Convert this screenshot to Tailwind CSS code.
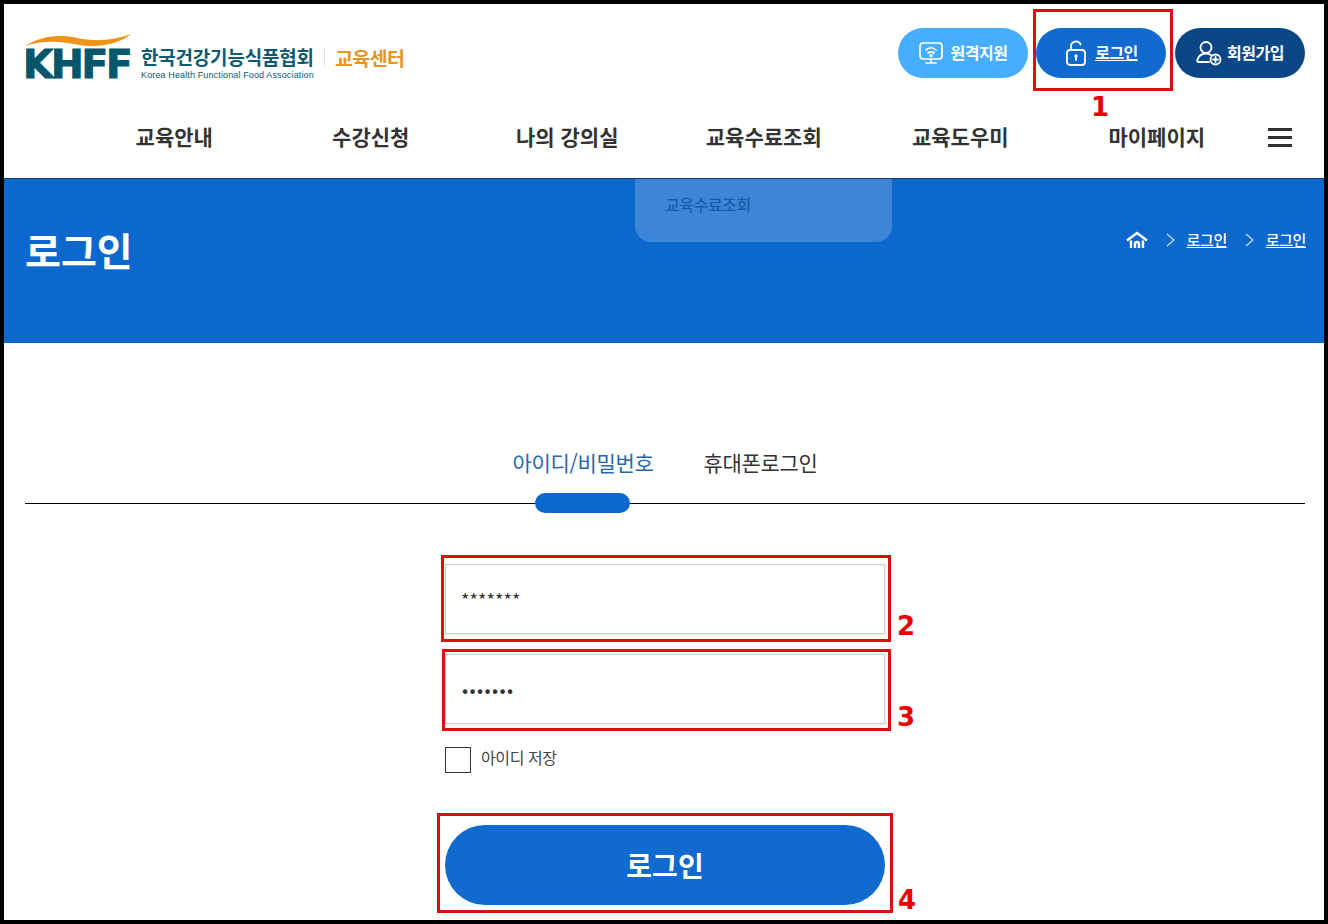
<!DOCTYPE html>
<html lang="ko">
<head>
  <meta charset="UTF-8" />
  <meta name="viewport" content="width=device-width, initial-scale=1" />
  <title>로그인 - 교육센터</title>
  <script src="https://cdn.jsdelivr.net/npm/@tailwindcss/browser@4"></script>
</head>
<body class="bg-white">
  <div class="relative w-[1328px] h-[924px] overflow-hidden font-['Noto_Sans_CJK_KR','Liberation_Sans',sans-serif] text-[#333]">
    <div class="h-full border-4 border-black overflow-hidden">

      <!-- 헤더 -->
      <header class="border-b border-[#1b3a5c]">
        <div class="flex justify-between pl-[21px] pr-[19px] pt-[24px]">
          <div class="flex items-start">
            <div class="relative w-[106px] h-[50px]">
              <svg class="absolute left-0 top-[4px]" width="106" height="16" viewBox="0 0 106 16"><path d="M0 14 C16 4 34 2 52 6 C72 10 90 8 106 2 C94 12 74 16 54 13 C36 9 18 8 0 14Z" fill="#ee9418"/></svg>
              <span class="absolute left-[-2px] top-[14px] font-['DejaVu_Sans'] font-bold text-[39px] leading-[46px] tracking-[-2.2px] text-[#05566b] [-webkit-text-stroke:1px_#05566b]">KHFF</span>
            </div>
            <div class="ml-[10px] mt-[18px] w-[174px]">
              <div class="text-[19px] leading-[22px] font-semibold tracking-[-0.2px] text-[#0b5a70] whitespace-nowrap">한국건강기능식품협회</div>
              <div class="font-['Liberation_Sans'] text-[9px] leading-[10px] mt-[2px] tracking-[0.13px] text-[#0b5a70] whitespace-nowrap">Korea Health Functional Food Association</div>
            </div>
            <div class="w-px h-[18px] bg-[#ddd] mt-[21px] ml-[9px]"></div>
            <div class="ml-[10px] mt-[17px] text-[19.5px] leading-[26px] font-semibold tracking-[-0.6px] text-[#e8951f]">교육센터</div>
          </div>
          <div class="flex gap-[8px] text-white text-[16px] font-semibold tracking-[-0.5px]">
            <a class="w-[130px] h-[50px] pb-[3px] rounded-full bg-[#47aeff] flex items-center justify-center gap-[8px]">
              <svg class="mt-[3px]" width="24" height="24" viewBox="0 0 24 24" fill="none" stroke="white" stroke-width="1.7" stroke-linecap="round"><rect x="1" y="2" width="22" height="16" rx="3"/><path d="M12 18v4M7 22h10M7 9c3-3 7-3 10 0M9 12c2-1.6 4-1.6 6 0"/><circle cx="12" cy="14.5" r=".8" fill="white"/></svg>
              <span>원격지원</span>
            </a>
            <a class="w-[130px] h-[50px] pb-[3px] rounded-full bg-[#116ace] flex items-center justify-center gap-[8px]">
              <svg class="mt-[3px] ml-[1px]" width="22" height="26" viewBox="0 0 22 26" fill="none" stroke="white" stroke-width="1.8" stroke-linecap="round"><rect x="2" y="10" width="18" height="15" rx="3"/><path d="M6 10V6.5a5 5 0 0 1 9.6-2"/><circle cx="11" cy="16" r="1.7" fill="white" stroke="none"/><path d="M11 17v3"/></svg>
              <span class="underline underline-offset-1 decoration-1">로그인</span>
            </a>
            <a class="ml-[1px] w-[130px] h-[50px] pb-[3px] rounded-full bg-[#0b4787] flex items-center justify-center gap-[5px]">
              <svg class="mt-[3px]" width="26" height="26" viewBox="0 0 26 26" fill="none" stroke="white" stroke-width="1.8" stroke-linecap="round"><circle cx="10" cy="7.5" r="5.5"/><path d="M13 22H2.5c-1 0-1.5-.8-1.2-1.8C2.5 16 6 13.5 10 13.5c2 0 3.6.5 5 1.5"/><circle cx="19.5" cy="19.5" r="5"/><path d="M19.5 17v5M17 19.5h5"/></svg>
              <span>회원가입</span>
            </a>
          </div>
        </div>
        <nav class="flex items-center h-[98px] pt-[16px] pl-[72px] text-[21px] font-semibold text-[#333]">
          <div class="grid grid-cols-6 w-[1179px] text-center">
            <a>교육안내</a>
            <a>수강신청</a>
            <a>나의 강의실</a>
            <a>교육수료조회</a>
            <a>교육도우미</a>
            <a>마이페이지</a>
          </div>
          <div class="ml-[13px] w-[24px] flex flex-col gap-[5px]">
            <span class="h-[3px] bg-[#333]"></span>
            <span class="h-[3px] bg-[#333]"></span>
            <span class="h-[3px] bg-[#333]"></span>
          </div>
        </nav>
      </header>

      <!-- 타이틀 배너 -->
      <section class="relative h-[164px] bg-[#0d68ce] flex justify-between items-start pl-[21px] pr-[18px] text-white">
        <h1 class="mt-[42px] text-[39px] leading-[56px] font-bold">로그인</h1>
        <div class="mt-[50px] flex items-center text-[15px] leading-[22px] font-medium tracking-[-0.4px]">
          <svg width="22" height="18" viewBox="0 0 22 18" fill="none" stroke="white" stroke-width="2.4"><path d="M1 9.5 11 2l10 7.5"/><path d="M5 17V9.5M17 17V9.5M9 17v-4a2 2 0 0 1 4 0v4"/></svg>
          <svg class="ml-[18px]" width="9" height="14" viewBox="0 0 9 14" fill="none" stroke="#cfe2f8" stroke-width="1.2"><path d="M1 1l7 6-7 6"/></svg>
          <a class="ml-[12px] underline underline-offset-1 decoration-1">로그인</a>
          <svg class="ml-[18px]" width="9" height="14" viewBox="0 0 9 14" fill="none" stroke="#cfe2f8" stroke-width="1.2"><path d="M1 1l7 6-7 6"/></svg>
          <a class="ml-[12px] underline underline-offset-1 decoration-1">로그인</a>
        </div>
        <!-- 서브메뉴 드롭다운 -->
        <div class="absolute left-[631px] top-0 w-[257px] h-[63px] rounded-b-[16px] bg-white/20 pl-[30px] pt-[14px] text-[16px] leading-[22px] font-medium tracking-[-0.4px] text-[#1a5ba8]">교육수료조회</div>
      </section>

      <!-- 로그인 폼 -->
      <main class="pl-[21px] pr-[19px] pt-[99px]">
        <div class="flex justify-center gap-[50px] h-[62px] border-b border-black text-[21px] leading-[40px]">
          <button class="relative h-[40px] text-[#2566b0] tracking-[-0.3px]">
            아이디/비밀번호
            <span class="absolute left-[23px] top-[51px] w-[95px] h-[20px] rounded-full bg-[#0d68ce]"></span>
          </button>
          <button class="h-[40px] text-[#333] tracking-[-0.3px]">휴대폰로그인</button>
        </div>
        <form class="w-[440px] mx-auto mt-[60px]">
          <input type="text" value="*******" class="block w-full h-[70px] border border-[#ccc] px-[15px] text-[18px] tracking-[0.1px] text-[#333] shadow-[1px_1px_2px_rgba(0,0,0,0.1)]" />
          <input type="password" value="1234567" class="block w-full h-[70px] mt-[20px] border border-[#ccc] px-[16px] text-[18px] tracking-[1.4px] text-[#333] shadow-[1px_1px_2px_rgba(0,0,0,0.1)]" />
          <label class="flex items-center mt-[23px] h-[26px] text-[16px] tracking-[-0.4px] text-[#444]">
            <span class="w-[26px] h-[26px] border border-[#333]"></span>
            <span class="ml-[10px] -mt-[6px]">아이디 저장</span>
          </label>
          <button type="button" class="block w-full h-[80px] mt-[52px] rounded-full bg-[#116ace] text-white text-[28px] font-bold">로그인</button>
        </form>
      </main>
    </div>

    <!-- 빨간 안내 표시 -->
    <div class="absolute left-[1033px] top-[9px] w-[140px] h-[82px] border-[3px] border-[#d81010]"></div>
    <div class="absolute left-[441px] top-[555px] w-[450px] h-[87px] border-[3px] border-[#d81010]"></div>
    <div class="absolute left-[442px] top-[649px] w-[449px] h-[82px] border-[3px] border-[#d81010]"></div>
    <div class="absolute left-[437px] top-[813px] w-[456px] h-[100px] border-[3px] border-[#d81010]"></div>
    <span class="absolute left-[1091px] top-[92px] font-['DejaVu_Sans'] font-bold text-[26px] leading-[30px] text-[#e80000]">1</span>
    <span class="absolute left-[897px] top-[611px] font-['DejaVu_Sans'] font-bold text-[26px] leading-[30px] text-[#e80000]">2</span>
    <span class="absolute left-[897px] top-[702px] font-['DejaVu_Sans'] font-bold text-[26px] leading-[30px] text-[#e80000]">3</span>
    <span class="absolute left-[898px] top-[885px] font-['DejaVu_Sans'] font-bold text-[26px] leading-[30px] text-[#e80000]">4</span>
  </div>
</body>
</html>
